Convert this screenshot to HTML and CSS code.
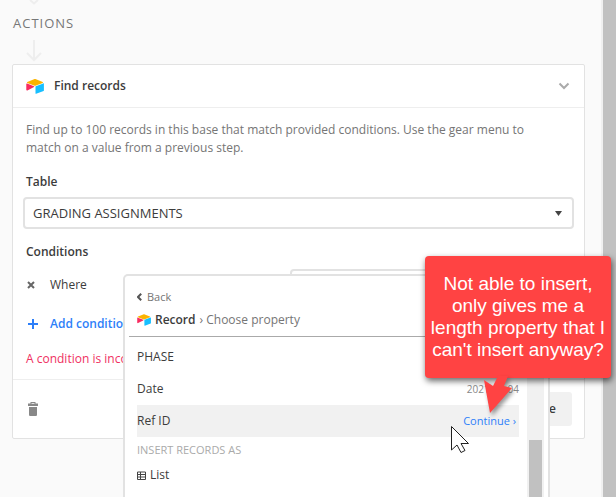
FILE: index.html
```
<!DOCTYPE html>
<html lang="en">

<head>
    <meta charset="UTF-8">
    <meta name="viewport" content="width=device-width, initial-scale=1.0">
    <title>Automation actions</title>
    <link rel="stylesheet" href="styles.css">
</head>

<body>
    <!-- shared logo -->
    <svg class="symbols" aria-hidden="true">
        <symbol id="logo" viewBox="0 0 18 15">
            <path fill="#fcb400" d="M8 .3 1.3 3.1c-.4.2-.4.6 0 .8L8 6.500c.7.300 1.400.300 2 0l6.700-2.600c.4-.2.4-.6 0-.8L10 .3C9.300 0 8.700 0 8 .3z" />
            <path fill="#18bfff" d="M9.500 7.700v6.700c0 .3.3.5.6.4l7.500-2.900c.2-.1.3-.2.3-.4V4.800c0-.3-.3-.5-.6-.4L9.800 7.300c-.2.1-.3.2-.3.4z" />
            <path fill="#f82b60" d="M8 8.100 1.400 11.500c-.4.300-1.100 0-1.100-.4V4.900c0-.4.4-.6.8-.4L8 7.300c.4.200.4.600 0 .8z" />
        </symbol>
    </svg>

    <div class="page">
        <main class="content">
            <svg class="flow-tip" viewBox="0 0 16 5" aria-hidden="true">
                <path d="M4 0 8 3.500 12 0" />
            </svg>
            <h2 class="section-title">ACTIONS</h2>
            <svg class="flow-arrow" viewBox="0 0 16 22" aria-hidden="true">
                <path d="M8 0v20M1 13l7 7 7-7" />
            </svg>

            <section class="card">
                <header class="card-header">
                    <svg class="logo" aria-hidden="true"><use href="#logo" /></svg>
                    <h3 class="card-title">Find records</h3>
                    <button class="icon-btn" type="button" aria-label="Collapse">
                        <svg class="chevron" viewBox="0 0 12 8"><path d="M1.500 1.500 6 6l4.500-4.500" /></svg>
                    </button>
                </header>

                <form class="card-body">
                    <p class="description">Find up to 100 records in this base that match provided conditions. Use the gear menu to match on a value from a previous step.</p>

                    <label class="label" for="table">Table</label>
                    <div class="select-wrap">
                        <select class="select" id="table">
                            <option>GRADING ASSIGNMENTS</option>
                        </select>
                        <svg class="caret" viewBox="0 0 7 5" aria-hidden="true"><path d="M0 0h7L3.500 5z" /></svg>
                    </div>

                    <h4 class="label">Conditions</h4>
                    <div class="condition">
                        <button class="icon-btn remove" type="button" aria-label="Remove condition">
                            <svg viewBox="0 0 8 8"><path d="M1 1l6 6M7 1 1 7" /></svg>
                        </button>
                        <span class="where">Where</span>
                        <div class="condition-value"></div>
                    </div>
                    <button class="add" type="button">
                        <svg viewBox="0 0 10 10" aria-hidden="true"><path d="M5 0v10M0 5h10" /></svg>
                        Add condition
                    </button>
                    <p class="error">A condition is incomplete</p>
                </form>

                <footer class="card-footer">
                    <button class="icon-btn trash" type="button" aria-label="Delete">
                        <svg viewBox="0 0 10 14"><path d="M2.500 0h5v1.500H10V4H0V1.500h2.500zM3.500 1v.8h3V1zM1 5h8v7.500c0 1-.5 1.500-1.500 1.500h-5C1.500 14 1 13.500 1 12.500z" /></svg>
                    </button>
                    <button class="done" type="button">Done</button>
                </footer>
            </section>
        </main>
        <div class="page-scroll"></div>

        <!-- property picker, opens over the card -->
        <div class="picker">
            <button class="back" type="button">
                <svg viewBox="0 0 5 8" aria-hidden="true"><path d="M4.200.7 1 4l3.200 3.300" /></svg>
                Back
            </button>
            <div class="crumbs">
                <svg class="logo small" aria-hidden="true"><use href="#logo" /></svg>
                <strong>Record</strong>
                <span>› Choose property</span>
            </div>
            <div class="picker-main">
                <ul class="list">
                    <li class="item">PHASE</li>
                    <li class="item">Date <span class="value">2021-03-04</span></li>
                    <li class="item active">Ref ID <a class="continue" href="#">Continue ›</a></li>
                    <li class="group">INSERT RECORDS AS</li>
                    <li class="item option">
                        <svg class="grid-icon" viewBox="0 0 9 9" aria-hidden="true"><path d="M.5 1h8v7.500h-8zM.5 3.500h8M.5 6h8M3.500 1v7.500" /></svg>
                        List
                    </li>
                </ul>
                <div class="picker-scroll"><div class="thumb"></div></div>
            </div>
        </div>

        <div class="callout">
            Not able to insert,<br>only gives me a<br>length property that I<br>can't insert anyway?
            <svg class="callout-arrow" viewBox="0 0 32 38" aria-hidden="true">
                <path d="M15 0h10l-4 10 8 2L7 37 1 4l9 6z" />
            </svg>
        </div>

        <svg class="cursor" viewBox="0 0 20 28" aria-hidden="true">
            <path d="M1.500 1.500v23.500l5.500-5 4 7.500 4-2-4-7H18.500z" />
        </svg>
    </div>
</body>

</html>
```
FILE: styles.css
```
* {
    box-sizing: border-box;
}

body {
    margin: 0;
    overflow: hidden;
    color: #3c3c3c;
    background-color: #fafafa;
    font: 12px/18px "Open Sans", "Noto Sans", sans-serif;
}

h2, h3, h4, p, ul {
    margin: 0;
    padding: 0;
}

button, select {
    margin: 0;
    padding: 0;
    border: 0;
    background: none;
    color: inherit;
    font: inherit;
}

svg {
    display: block;
    fill: none;
    flex: none;
}

.symbols {
    display: none;
}

.page {
    position: relative;
    display: flex;
    min-height: 100vh;
    overflow: hidden;
}

.content {
    flex: 1;
    padding: 0 16px 0 12px;
}

.page-scroll {
    width: 15px;
    background-color: #c1c1c1;
    border-left: 2px solid #f0f0f0;
}

/* flow */
.flow-tip,
.flow-arrow {
    width: 16px;
    margin-left: 14px;
    stroke: #eee;
    stroke-width: 2;
}

.flow-tip {
    height: 5px;
}

.flow-arrow {
    height: 22px;
    margin-bottom: 2px;
}

.section-title {
    margin: 9px 0 8px 1px;
    color: #777;
    font-size: 13px;
    font-weight: 400;
    letter-spacing: 1px;
}

/* card */
.card {
    background-color: #fff;
    border: 1px solid #e2e2e2;
    border-radius: 2px;
}

.card-header {
    display: flex;
    align-items: center;
    height: 43px;
    padding: 0 13px;
    border-bottom: 1px solid #eee;
}

.logo {
    width: 18px;
    height: 15px;
}

.card-title {
    flex: 1;
    margin-left: 10px;
    font-size: 12px;
    font-weight: 600;
}

.icon-btn {
    display: flex;
}

.chevron {
    width: 12px;
    height: 8px;
    margin-right: 1px;
    stroke: #aaa;
    stroke-width: 2;
}

.card-body {
    padding: 13px 10px 11px;
}

.description {
    margin-bottom: 16px;
    padding: 0 24px 0 3px;
    color: #757575;
}

.label {
    display: block;
    margin: 14px 3px 6px;
    font-size: 12px;
    font-weight: 600;
}

.select-wrap {
    position: relative;
}

.select {
    display: block;
    width: 100%;
    height: 32px;
    padding: 0 8px;
    appearance: none;
    background-color: #fff;
    border: 2px solid #e2e2e2;
    border-radius: 4px;
    font-size: 13px;
}

.caret {
    position: absolute;
    top: 14px;
    right: 12px;
    width: 7px;
    height: 5px;
    fill: #444;
}

.condition {
    display: flex;
    align-items: center;
    margin-top: 8px;
    padding-left: 4px;
}

.remove svg {
    width: 8px;
    height: 8px;
    stroke: #666;
    stroke-width: 2;
}

.where {
    flex: none;
    width: 255px;
    padding-left: 15px;
}

.condition-value {
    flex: 1;
    height: 32px;
    border: 2px solid #e2e2e2;
    border-radius: 4px;
}

.add {
    display: flex;
    align-items: center;
    gap: 12px;
    margin: 14px 0 17px 5px;
    color: #2d7ff9;
    font-weight: 600;
}

.add svg {
    width: 10px;
    height: 10px;
    stroke: #2d7ff9;
    stroke-width: 2;
}

.error {
    padding-left: 3px;
    color: #ef3061;
}

.card-footer {
    display: flex;
    align-items: center;
    justify-content: space-between;
    height: 59px;
    padding: 0 12px 0 15px;
    border-top: 1px solid #eee;
}

.trash svg {
    width: 10px;
    height: 14px;
    fill: #888;
    fill-rule: evenodd;
}

.done {
    height: 34px;
    padding: 0 16px;
    background-color: #f1f1f1;
    border-radius: 3px;
    font-weight: 600;
}

/* property picker */
.picker {
    position: absolute;
    top: 274px;
    right: 66px;
    bottom: 0;
    left: 123px;
    display: flex;
    flex-direction: column;
    padding: 12px 4px 0;
    background-color: #fff;
    border: 2px solid #e2e2e2;
    border-bottom: 0;
    border-radius: 5px 5px 0 0;
}

.back {
    display: flex;
    align-items: center;
    gap: 5px;
    padding-left: 8px;
    color: #757575;
    font-size: 11px;
}

.back svg {
    width: 5px;
    height: 8px;
    stroke: #555;
    stroke-width: 2;
}

.crumbs {
    display: flex;
    align-items: center;
    gap: 4px;
    padding: 5px 8px 7px;
    border-bottom: 1px solid #aaa;
    color: #757575;
}

.crumbs strong {
    color: #3c3c3c;
    font-weight: 600;
}

.logo.small {
    width: 14px;
    height: 12px;
}

.picker-main {
    display: flex;
    flex: 1;
}

.list {
    flex: 1;
    padding: 4px 8px 0;
    list-style-type: none;
}

.item {
    display: flex;
    align-items: center;
    justify-content: space-between;
    height: 32px;
}

.active {
    background-color: #f1f1f1;
}

.value {
    color: #888;
    font-size: 10px;
}

.continue {
    padding-right: 3px;
    color: #2d7ff9;
    font-size: 11px;
    text-decoration: none;
}

.group {
    padding-top: 4px;
    color: #aaa;
    font-size: 11px;
}

.option {
    justify-content: flex-start;
    gap: 4px;
}

.grid-icon {
    width: 9px;
    height: 9px;
    stroke: #444;
}

.picker-scroll {
    width: 17px;
    padding: 103px 2px 0;
    background-color: #f1f1f1;
}

.thumb {
    height: 100%;
    background-color: #c1c1c1;
}

/* annotation */
.callout {
    position: absolute;
    top: 256px;
    right: 5px;
    width: 186px;
    padding: 17px 0;
    color: #fff;
    background-color: #ff4343;
    border-radius: 4px;
    box-shadow: 1px 3px 6px rgba(0, 0, 0, 0.6);
    font: 19px/22px "Liberation Sans", Arial, sans-serif;
    text-align: center;
}

.callout-arrow {
    position: absolute;
    top: 120px;
    left: 58px;
    width: 32px;
    height: 38px;
    fill: #ff4343;
    overflow: visible;
    filter: drop-shadow(2px 3px 2px rgba(0, 0, 0, 0.4));
}

.cursor {
    position: absolute;
    top: 425px;
    left: 450px;
    width: 20px;
    height: 28px;
    fill: #fff;
    stroke: #222;
}
```
